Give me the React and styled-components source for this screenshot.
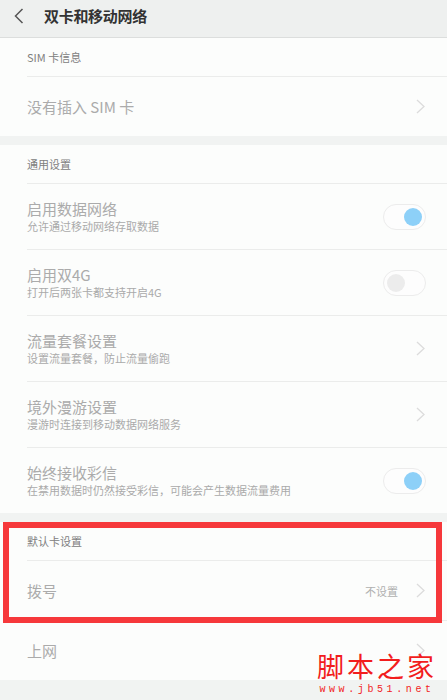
import React from "react";
import styled, { createGlobalStyle } from "styled-components";

const GlobalStyle = createGlobalStyle`
  html, body {
    margin: 0;
    padding: 0;
    background: #f1f3f2;
    font-family: "Noto Sans CJK SC", "Noto Sans", sans-serif;
  }
`;

const sections = [
  {
    title: "SIM 卡信息",
    rows: [{ label: "没有插入 SIM 卡", type: "link" }],
  },
  {
    title: "通用设置",
    rows: [
      { label: "启用数据网络", sub: "允许通过移动网络存取数据", type: "toggle", on: true },
      { label: "启用双4G", sub: "打开后两张卡都支持开启4G", type: "toggle", on: false },
      { label: "流量套餐设置", sub: "设置流量套餐，防止流量偷跑", type: "link" },
      { label: "境外漫游设置", sub: "漫游时连接到移动数据网络服务", type: "link" },
      {
        label: "始终接收彩信",
        sub: "在禁用数据时仍然接受彩信，可能会产生数据流量费用",
        type: "toggle",
        on: true,
      },
    ],
  },
];

function Chevron() {
  return (
    <svg width="9" height="15" viewBox="0 0 9 15">
      <path d="M1 1 L8 7.5 L1 14" fill="none" stroke="#dcdcdc" strokeWidth="1.3" />
    </svg>
  );
}

function BackArrow() {
  return (
    <svg width="10" height="16" viewBox="0 0 10 16">
      <path d="M8.5 1 L1.5 8 L8.5 15" fill="none" stroke="#555" strokeWidth="1.5" />
    </svg>
  );
}

function Row({ row }) {
  return (
    <RowBox $tall={!!row.sub}>
      <RowText>
        <Label>{row.label}</Label>
        {row.sub && <Sub>{row.sub}</Sub>}
      </RowText>
      {row.value && <Value>{row.value}</Value>}
      {row.type === "link" && <Chevron />}
      {row.type === "toggle" && (
        <Switch $on={row.on}>
          <Knob $on={row.on} />
        </Switch>
      )}
    </RowBox>
  );
}

export default function App() {
  return (
    <>
      <GlobalStyle />
      <Page>
        <Header>
          <BackArrow />
          <Title>双卡和移动网络</Title>
        </Header>

        {sections.map((s) => (
          <Card key={s.title}>
            <SectionTitle>{s.title}</SectionTitle>
            {s.rows.map((r) => (
              <Row key={r.label} row={r} />
            ))}
          </Card>
        ))}

        <Card>
          <Highlight>
            <SectionTitle>默认卡设置</SectionTitle>
            <Row row={{ label: "拨号", value: "不设置", type: "link" }} />
          </Highlight>
          <Row row={{ label: "上网", type: "link" }} />
        </Card>

        <Watermark>
          <Brand>脚本之家</Brand>
          <Site>www.jb51.net</Site>
        </Watermark>
      </Page>
    </>
  );
}

const Page = styled.div`
  position: relative;
  width: 447px;
  height: 700px;
  overflow: hidden;
  background: #f1f3f2;
`;

const Header = styled.div`
  display: flex;
  align-items: center;
  gap: 20px;
  height: 31px;
  padding: 0 0 6px 14px;
  background: #eef0ef;
  border-bottom: 1px solid #dcdedd;
`;

const Title = styled.div`
  font-size: 15px;
  font-weight: 700;
  color: #333;
  letter-spacing: -0.3px;
`;

const Card = styled.div`
  background: #fcfdfc;
  margin-bottom: 9px;
`;

const SectionTitle = styled.div`
  height: 38px;
  margin-left: 27px;
  display: flex;
  align-items: center;
  font-size: 11px;
  color: #808080;
`;

const RowBox = styled.div`
  display: flex;
  align-items: center;
  gap: 12px;
  height: ${(p) => (p.$tall ? "65px" : "59px")};
  margin-left: 27px;
  padding-right: 22px;
  border-top: 1px solid #ebeceb;
`;

const RowText = styled.div`
  flex: 1;
  display: flex;
  flex-direction: column;
  gap: 1px;
`;

const Label = styled.div`
  font-size: 15px;
  line-height: 19px;
  color: #ababab;
`;

const Sub = styled.div`
  font-size: 11px;
  line-height: 15px;
  color: #aaaaaa;
`;

const Value = styled.div`
  font-size: 11px;
  color: #b0b0b0;
  margin-right: 6px;
`;

const Switch = styled.div`
  box-sizing: border-box;
  width: 43px;
  height: 26px;
  margin-right: -1px;
  border-radius: 13px;
  border: 1px solid #ececec;
  background: #fdfdfd;
  display: flex;
  align-items: center;
  justify-content: ${(p) => (p.$on ? "flex-end" : "flex-start")};
  padding: 0 3px;
`;

const Knob = styled.div`
  width: 18px;
  height: 18px;
  border-radius: 50%;
  background: ${(p) => (p.$on ? "#8dd0f8" : "#ececec")};
`;

const Highlight = styled.div`
  position: relative;
  &::after {
    content: "";
    position: absolute;
    top: 0;
    left: 3px;
    right: 5px;
    bottom: -3px;
    border: 6px solid #f6383b;
    pointer-events: none;
  }
`;

const Watermark = styled.div`
  position: absolute;
  right: 10px;
  bottom: 5px;
  display: flex;
  flex-direction: column;
  align-items: center;
  gap: 3px;
  color: #f21d1d;
`;

const Brand = styled.div`
  font-family: "Noto Sans CJK SC", serif;
  font-size: 27px;
  line-height: 30px;
  letter-spacing: 3px;
`;

const Site = styled.div`
  font-family: "Liberation Mono", monospace;
  font-size: 10px;
  line-height: 11px;
  letter-spacing: 3.6px;
`;
